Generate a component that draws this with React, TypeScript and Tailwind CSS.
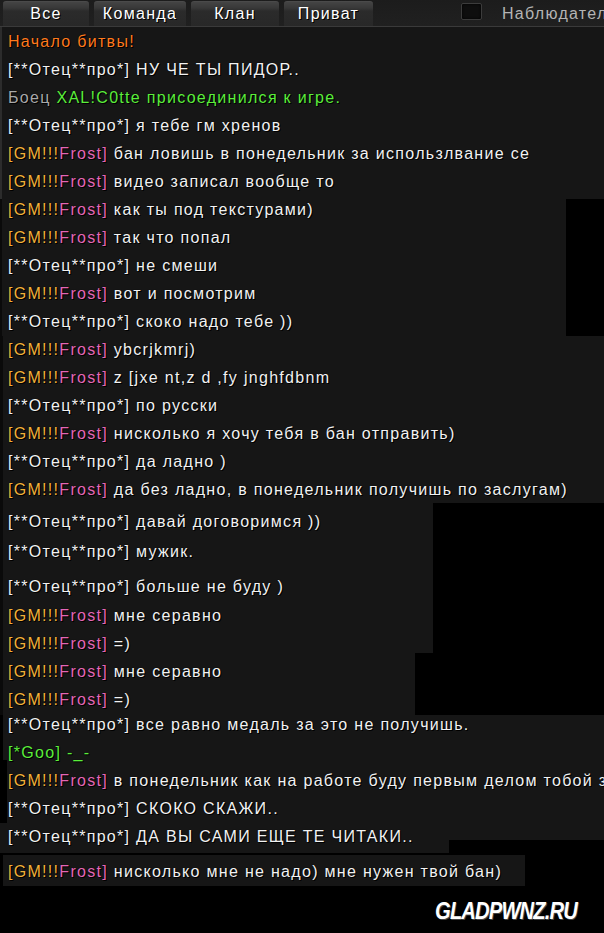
import React from "react";

type Part = [string, string];
type Row = { parts: Part[]; mt?: number };

const W = "text-[#f2f2f2]";
const Y = "text-[#f2b13a]";
const P = "text-[#e467b6]";
const G = "text-[#5cee3c]";
const O = "text-[#ff7a1e]";
const S = "text-[#a9a9a9]";

const otec = (msg: string): Part[] => [["[**Отец**про*] ", W], [msg, W]];
const gm = (msg: string): Part[] => [["[GM!!!", Y], ["Frost]", P], [" " + msg, W]];

const rows: Row[] = [
  { parts: [["Начало битвы!", O]] },
  { parts: otec("НУ ЧЕ ТЫ ПИДОР..") },
  { parts: [["Боец ", S], ["XAL!C0tte присоединился к игре.", G]] },
  { parts: otec("я тебе гм хренов") },
  { parts: gm("бан ловишь в понедельник за использлвание се") },
  { parts: gm("видео записал вообще то") },
  { parts: gm("как ты под текстурами)") },
  { parts: gm("так что попал") },
  { parts: otec("не смеши") },
  { parts: gm("вот и посмотрим") },
  { parts: otec("скоко надо тебе ))") },
  { parts: gm("ybcrjkmrj)") },
  { parts: gm("z [jxe nt,z d ,fy jnghfdbnm") },
  { parts: otec("по русски") },
  { parts: gm("нисколько я хочу тебя в бан отправить)") },
  { parts: otec("да ладно )") },
  { parts: gm("да без ладно, в понедельник получишь по заслугам)") },
  { parts: otec("давай договоримся ))"), mt: 4 },
  { parts: otec("мужик."), mt: 2 },
  { parts: otec("больше не буду )"), mt: 7 },
  { parts: gm("мне серавно"), mt: 1 },
  { parts: gm("=)") },
  { parts: gm("мне серавно") },
  { parts: gm("=)") },
  { parts: otec("все равно медаль за это не получишь."), mt: -3 },
  { parts: [["[*Goo] -_-", G]] },
  { parts: gm("в понедельник как на работе буду первым делом тобой з") },
  { parts: otec("СКОКО СКАЖИ..") },
  { parts: otec("ДА ВЫ САМИ ЕЩЕ ТЕ ЧИТАКИ..") },
  { parts: gm("нисколько мне не надо) мне нужен твой бан)"), mt: 7 },
];

function Tab({ label, w }: { label: string; w: string }) {
  return (
    <div className={`${w} shrink-0 h-[25px] rounded-t-[3px] bg-[linear-gradient(#444_0px,#383838_6px,#2b2b2b_9px,#282828_100%)] border-t border-[#4a4a4a] flex items-center justify-center text-[16px] tracking-[1.3px] text-white [text-shadow:1px_1px_0_#000]`}>
      {label}
    </div>
  );
}

export default function App() {
  return (
    <div className="w-[604px] h-[933px] bg-black overflow-hidden font-['Liberation_Sans',Arial,sans-serif]">
      {/* tab bar */}
      <div className="h-[27px] bg-[linear-gradient(#1c1c1c,#202020)] border-b border-[#3a3a3a] flex items-start pl-[3px] gap-[5px] pt-[1px] overflow-hidden">
        <Tab label="Все" w="w-[86px]" />
        <Tab label="Команда" w="w-[92px]" />
        <Tab label="Клан" w="w-[88px]" />
        <Tab label="Приват" w="w-[89px]" />
        <div className="shrink-0 ml-[83px] mt-[2px] w-[21px] h-[17px] rounded-[2px] bg-[#0e0e0e] border border-[#3c3c3c] shadow-[inset_0_0_3px_#000]" />
        <div className="shrink-0 ml-[15px] mt-[1px] text-[16px] tracking-[1.3px] text-[#b4b4b4] whitespace-nowrap">Наблюдатель</div>
      </div>

      {/* chat area */}
      <div className="grid">
        {/* background pieces */}
        <div className="col-start-1 row-start-1 flex flex-col">
          <div className="h-[172px] bg-[#161616] border-l-2 border-[#2c2c2c]" />
          <div className="h-[137px] flex">
            <div className="w-[566px] bg-[#161616] border-l-2 border-[#0a0a0a]" />
          </div>
          <div className="h-[167px] bg-[#161616] border-l-[3px] border-[#0a0a0a]" />
          <div className="h-[150px] flex">
            <div className="w-[433px] bg-[#161616] border-l-[3px] border-[#0a0a0a]" />
          </div>
          <div className="h-[62px] flex">
            <div className="w-[415px] bg-[#161616] border-l-[3px] border-[#0a0a0a]" />
          </div>
          <div className="h-[45px] bg-[#161616] border-l-[3px] border-black" />
          <div className="h-[63px] bg-[#161616] border-l-[7px] border-black" />
          <div className="h-[17px] bg-[#161616]" />
          <div className="h-[13px] flex">
            <div className="w-[449px] bg-[#161616]" />
          </div>
          <div className="h-[2px]" />
          <div className="h-[31px] flex pl-[3px]">
            <div className="w-[522px] bg-[#161616]" />
          </div>
          <div className="h-[47px] flex items-start justify-end pr-[27px] pt-[13px]">
            <div className="text-[24px] leading-[24px] font-bold italic text-white tracking-[-1px] scale-x-[0.84] origin-right [text-shadow:1px_1px_0_#444]">
              GLADPWNZ.RU
            </div>
          </div>
        </div>

        {/* text rows */}
        <div className="col-start-1 row-start-1 flex flex-col pt-[1px] pl-[8px] overflow-hidden">
          {rows.map((r, i) => (
            <div
              key={i}
              className="h-[28px] leading-[28px] text-[16px] tracking-[1.3px] whitespace-nowrap [text-shadow:1px_1px_0_#000,0_0_1px_#000]"
              style={r.mt ? { marginTop: r.mt } : undefined}
            >
              {r.parts.map(([t, c], j) => (
                <span key={j} className={c}>
                  {t}
                </span>
              ))}
            </div>
          ))}
        </div>
      </div>
    </div>
  );
}
